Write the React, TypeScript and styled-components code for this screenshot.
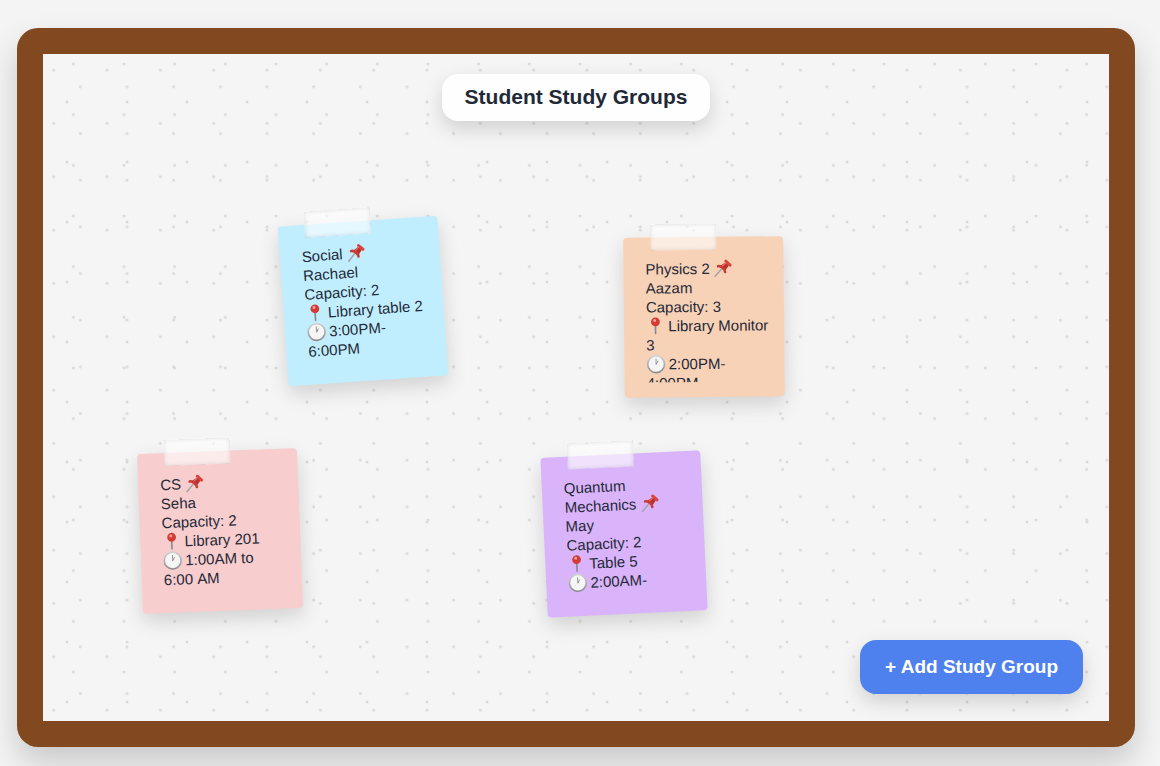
import React from "react";
import styled, { createGlobalStyle } from "styled-components";

const GlobalStyle = createGlobalStyle`
  *, *::before, *::after { box-sizing: border-box; }
  body {
    margin: 0;
    background: #f4f4f4;
    color: #1f2937;
    font-family: "Liberation Sans", Arial, sans-serif;
  }
`;

const Page = styled.main`
  display: flex;
  min-height: 100vh;
  padding: 28px 25px 19px 17px;
`;

const Board = styled.section`
  position: relative;
  flex: 1;
  display: flex;
  flex-direction: column;
  align-items: center;
  justify-content: space-between;
  padding: 20px 26px 27px;
  border: 26px solid #82481f;
  border-radius: 21px;
  background: #f5f5f5;
  box-shadow: 0 16px 32px rgba(0, 0, 0, 0.18);
`;

const Texture = styled.svg`
  position: absolute;
  inset: 0;
  width: 100%;
  height: 100%;
`;

const Title = styled.h1`
  position: relative;
  margin: 0;
  padding: 11px 23px 12px;
  border-radius: 16px;
  background: #fefefe;
  box-shadow: 0 8px 20px rgba(0, 0, 0, 0.15);
  font-size: 21px;
  line-height: 24px;
  font-weight: 700;
`;

const AddButton = styled.button`
  position: relative;
  align-self: flex-end;
  padding: 16px 25px;
  border: 0;
  border-radius: 16px;
  background: #4f81ee;
  box-shadow: 0 8px 20px rgba(0, 0, 0, 0.15);
  color: #fff;
  font-family: inherit;
  font-size: 19px;
  line-height: 22px;
  font-weight: 700;
  cursor: pointer;
`;

const Note = styled.article<{ $x: number; $y: number; $angle: number; $color: string }>`
  position: absolute;
  left: ${(p) => p.$x}px;
  top: ${(p) => p.$y}px;
  width: 160px;
  height: 160px;
  padding: 22px 12px 15px 22px;
  border-radius: 4px;
  background: ${(p) => p.$color};
  box-shadow: 0 8px 20px rgba(0, 0, 0, 0.15);
  transform: rotate(${(p) => p.$angle}deg);
`;

const Tape = styled.span`
  position: absolute;
  top: -13px;
  left: 27px;
  width: 66px;
  height: 26px;
  background: rgba(255, 255, 255, 0.6);
  box-shadow: inset 0 0 4px rgba(0, 0, 0, 0.12);
`;

const NoteText = styled.div`
  height: 123px;
  overflow: hidden;
  font-size: 15px;
  line-height: 19px;
`;

const Line = styled.p`
  margin: 0;
`;

const Glyph = styled.svg`
  display: inline-block;
  width: 18px;
  height: 19px;
  vertical-align: top;
  overflow: visible;
`;

const Pushpin = () => (
  <Glyph viewBox="0 0 18 19" aria-hidden="true">
    <path d="M7.6 10.6 1.6 17.4" stroke="#a3a7ad" strokeWidth="1.6" strokeLinecap="round" />
    <path d="M12.2 3.6 15.4 6.8 11.6 12 6 7.4Z" fill="#bb302d" />
    <path d="M4.6 7.4C7 6.6 11.6 10.4 11.6 13.2" fill="none" stroke="#c93a35" strokeWidth="2.6" strokeLinecap="round" />
    <path d="M12.4 2.4 16.6 6.4" stroke="#d8443f" strokeWidth="3" strokeLinecap="round" />
    <path d="M9.2 7 12.2 4.2" stroke="#e8706a" strokeWidth="1.2" strokeLinecap="round" />
  </Glyph>
);

const RoundPin = () => (
  <Glyph viewBox="0 0 18 19" aria-hidden="true">
    <path d="M9.4 9V17" stroke="#85888e" strokeWidth="1.6" strokeLinecap="round" />
    <circle cx="9.4" cy="5.4" r="4.4" fill="#d23c35" />
    <circle cx="8.6" cy="4" r="1.5" fill="#f0a39d" />
  </Glyph>
);

const Clock = () => (
  <Glyph viewBox="0 0 18 19" aria-hidden="true">
    <defs>
      <linearGradient id="clock-rim" x1="0" y1="0" x2="0" y2="1">
        <stop offset="0" stopColor="#d0d0d0" />
        <stop offset="1" stopColor="#8c8c8c" />
      </linearGradient>
    </defs>
    <circle cx="9.6" cy="9.7" r="8.4" fill="#f6f6f6" stroke="url(#clock-rim)" strokeWidth="1.6" />
    <path d="M9.6 10V4.2M9.6 10 11.6 6.4" stroke="#8a8a8a" strokeWidth="0.9" fill="none" />
  </Glyph>
);

const dots = [
  { id: "a", size: 160, cx: 32, cy: 48 },
  { id: "b", size: 152, cx: 91, cy: 30 },
  { id: "c", size: 140, cx: 112, cy: 98 },
  { id: "d", size: 180, cx: 72, cy: 144 },
];

const notes = [
  { x: 240, y: 167, angle: -4, color: "#c1eefe", subject: "Social", host: "Rachael", capacity: 2, place: "Library table 2", time: "3:00PM-6:00PM" },
  { x: 581, y: 183, angle: -0.6, color: "#f8d2b7", subject: "Physics 2", host: "Aazam", capacity: 3, place: "Library Monitor 3", time: "2:00PM-4:00PM" },
  { x: 97, y: 397, angle: -2.2, color: "#f7cdce", subject: "CS", host: "Seha", capacity: 2, place: "Library 201", time: "1:00AM to 6:00\u00a0AM" },
  { x: 501, y: 400, angle: -2.7, color: "#dab4fa", subject: "Quantum Mechanics", host: "May", capacity: 2, place: "Table 5", time: "2:00AM-" },
];

export default function App() {
  return (
    <>
      <GlobalStyle />
      <Page>
        <Board>
          <Texture aria-hidden="true">
            <defs>
              {dots.map((d) => (
                <pattern key={d.id} id={`dots-${d.id}`} width={d.size} height={d.size} patternUnits="userSpaceOnUse" patternTransform="scale(0.33333)">
                  <circle cx={d.cx} cy={d.cy} r="4.5" fill="#dadada" />
                </pattern>
              ))}
            </defs>
            {dots.map((d) => (
              <rect key={d.id} width="100%" height="100%" fill={`url(#dots-${d.id})`} />
            ))}
          </Texture>
          <Title>Student Study Groups</Title>
          {notes.map((n) => (
            <Note key={n.subject} $x={n.x} $y={n.y} $angle={n.angle} $color={n.color}>
              <Tape />
              <NoteText>
                <Line>{n.subject} <Pushpin /></Line>
                <Line>{n.host}</Line>
                <Line>Capacity: {n.capacity}</Line>
                <Line><RoundPin /> {n.place}</Line>
                <Line><Clock /> {n.time}</Line>
              </NoteText>
            </Note>
          ))}
          <AddButton type="button">+ Add Study Group</AddButton>
        </Board>
      </Page>
    </>
  );
}
